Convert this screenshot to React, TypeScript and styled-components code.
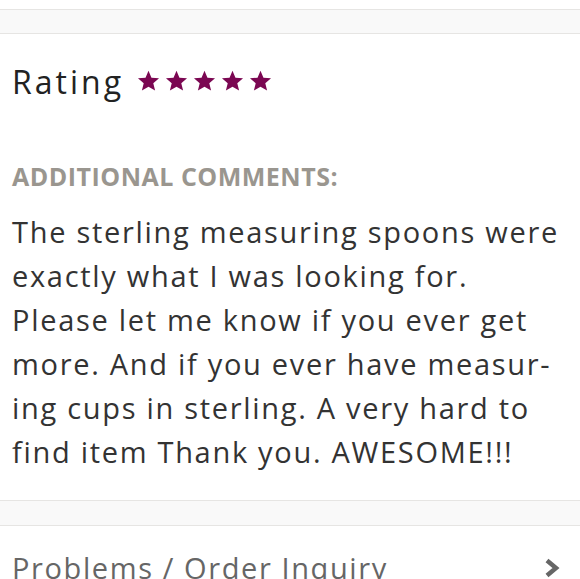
import React from 'react';
import styled, { createGlobalStyle } from 'styled-components';

const Global = createGlobalStyle`
  body {
    margin: 0;
    background: #fff;
    font-family: "Open Sans", Lato, sans-serif;
  }
`;

const Page = styled.div`
  display: flex;
  flex-direction: column;
  padding-top: 9px;
  overflow: hidden;
  height: 579px;
`;

const Divider = styled.div<{ $h: number }>`
  height: ${(p) => p.$h}px;
  background: #f9f9f9;
  border-top: 1px solid #e6e5e3;
  border-bottom: 1px solid #e6e5e3;
  flex-shrink: 0;
`;

const Section = styled.section`
  padding: 0 12px;
`;

const RatingRow = styled.div`
  display: flex;
  align-items: center;
  gap: 13px;
  margin-top: 24px;
  height: 46px;
`;

const Title = styled.h2`
  margin: 0;
  font-size: 32px;
  font-weight: 400;
  color: #222;
  letter-spacing: 3px;
`;

const Stars = styled.div`
  display: flex;
  gap: 5px;
`;

const Label = styled.div`
  margin-top: 55px;
  font-size: 25px;
  font-weight: 700;
  color: #9a968f;
  letter-spacing: 0.5px;
`;

const Comment = styled.p`
  margin: 17px 0 26px;
  font-size: 29px;
  line-height: 44px;
  letter-spacing: 1.7px;
  color: #333;
`;

const Line = styled.span`
  display: block;
  white-space: nowrap;
`;

const LinkRow = styled.div`
  display: flex;
  align-items: center;
  justify-content: space-between;
  padding: 22px 20px 0 12px;
  font-size: 29px;
  letter-spacing: 1.6px;
  color: #666;
`;

const Star = () => (
  <svg width="23" height="22" viewBox="0 0 24 23">
    <path
      d="M12 0.8l3.1 7.3 7.9 0.6-6 5.1 1.9 7.7L12 17.4l-6.9 4.1 1.9-7.7-6-5.1 7.9-0.6z"
      fill="#7b0752"
    />
  </svg>
);

const Chevron = () => (
  <svg width="16" height="20" viewBox="0 0 16 20">
    <path d="M3 2.5l9 7.5-9 7.5" fill="none" stroke="#666" strokeWidth="4.5" />
  </svg>
);

const lines = [
  'The sterling measuring spoons were',
  'exactly what I was looking for.',
  'Please let me know if you ever get',
  'more. And if you ever have measur-',
  'ing cups in sterling. A very hard to',
  'find item Thank you. AWESOME!!!',
];

export default function App() {
  return (
    <Page>
      <Global />
      <Divider $h={23} />
      <Section>
        <RatingRow>
          <Title>Rating</Title>
          <Stars>
            {[0, 1, 2, 3, 4].map((i) => (
              <Star key={i} />
            ))}
          </Stars>
        </RatingRow>
        <Label>ADDITIONAL COMMENTS:</Label>
        <Comment>
          {lines.map((l) => (
            <Line key={l}>{l}</Line>
          ))}
        </Comment>
      </Section>
      <Divider $h={24} />
      <LinkRow>
        <span>Problems / Order Inquiry</span>
        <Chevron />
      </LinkRow>
    </Page>
  );
}
